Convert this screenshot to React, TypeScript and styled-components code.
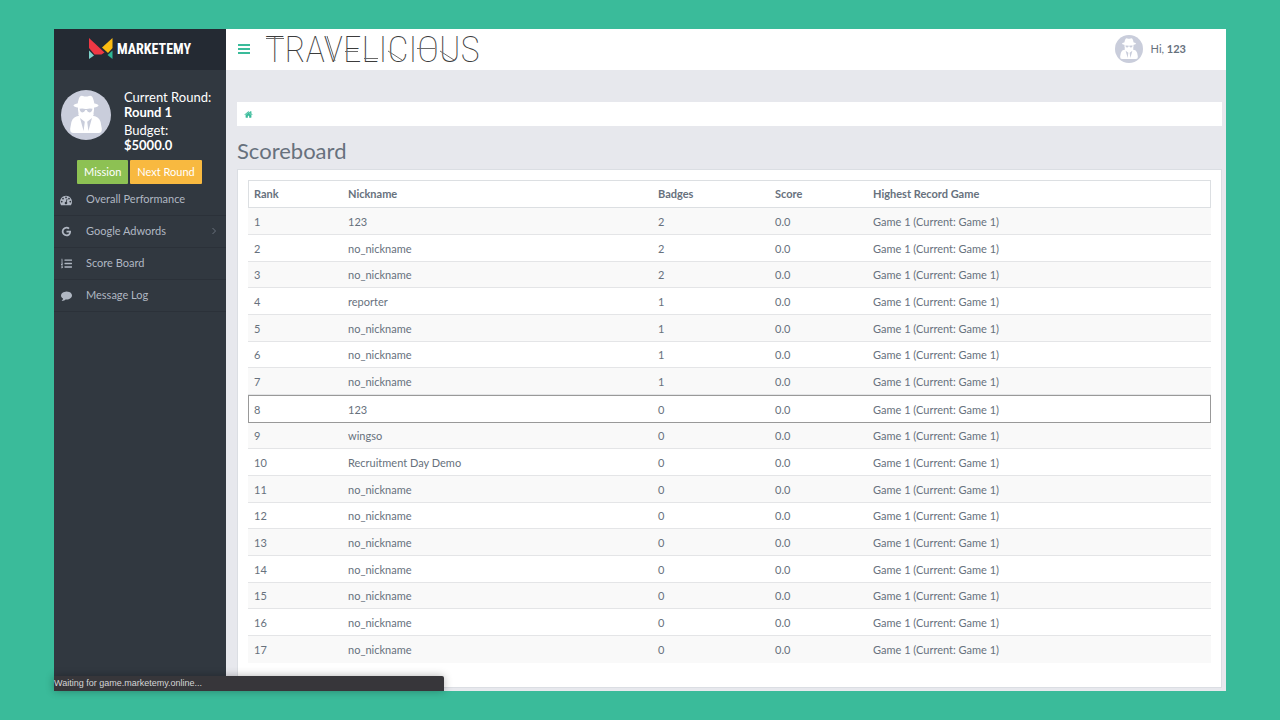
import React from "react";
import styled, { createGlobalStyle } from "styled-components";
import { FaListOl } from "react-icons/fa";

const GlobalStyle = createGlobalStyle`
  *, *::before, *::after { box-sizing: border-box; }
  body {
    margin: 0;
    background: #3abb9a;
    color: #67717d;
    font-family: Lato, "Liberation Sans", sans-serif;
    font-size: 11px;
  }
`;

const Backdrop = styled.div`
  min-height: 100vh;
  padding: 29px 54px;
  display: flex;
`;

const Frame = styled.div`
  position: relative;
  flex: 1;
  display: grid;
  grid-template-columns: 172px minmax(0, 1fr);
  grid-template-rows: 41px auto;
  background: #e7e8ed;
`;

const Brand = styled.a`
  display: flex;
  align-items: center;
  gap: 4px;
  padding: 0 34px 2px;
  background: #242a33;
  color: #ffffff;
  text-decoration: none;
`;

const BrandName = styled.span`
  font-family: "Roboto Condensed", "Liberation Sans Narrow", Roboto, sans-serif;
  font-size: 14px;
  line-height: 16px;
  font-weight: 700;
`;

const TopBar = styled.header`
  display: flex;
  align-items: center;
  padding: 0 40px 2px 12px;
  background: #ffffff;
`;

const MenuButton = styled.button`
  display: flex;
  padding: 0;
  border: 0;
  background: none;
  cursor: pointer;
`;

const ClientLogo = styled.svg`
  width: 240px;
  height: 46px;
  margin: -4px 0 -4px 15px;
  overflow: visible;
  font-family: "Roboto Condensed", "Liberation Sans Narrow", Roboto, sans-serif;
  font-weight: 100;
  font-size: 37px;
`;

const UserLink = styled.a`
  display: flex;
  align-items: center;
  gap: 8px;
  margin-left: auto;
  color: #67717d;
  text-decoration: none;
`;

const Sidebar = styled.aside`
  background: #313840;
`;

const Profile = styled.section`
  display: flex;
  gap: 13px;
  padding: 20px 7px 0;
  color: #ffffff;
`;

const Facts = styled.dl`
  margin: 0;
  font-size: 13px;
  line-height: 15px;
`;

const FactLabel = styled.dt`
  white-space: nowrap;
`;

const FactValue = styled.dd`
  margin: 0 0 4px;
  line-height: 14px;
  font-weight: 700;
`;

const Actions = styled.div`
  display: flex;
  gap: 2px;
  padding: 4px 23px 0;
`;

const ActionButton = styled.button<{ $color: string }>`
  height: 24px;
  padding: 0 7px 1px;
  border: 0;
  border-radius: 1px;
  background: ${(p) => p.$color};
  color: #ffffff;
  font: inherit;
  white-space: nowrap;
  cursor: pointer;
`;

const MenuLink = styled.a`
  display: flex;
  align-items: center;
  height: 32px;
  padding: 0 8px 2px 6px;
  border-bottom: 1px solid #2b3139;
  color: #b0b7c2;
  text-decoration: none;
`;

const MenuIcon = styled.span`
  display: flex;
  justify-content: center;
  width: 12px;
  margin-right: 14px;
  padding-top: 2px;
`;

const MenuArrow = styled.svg`
  margin-left: auto;
  fill: none;
  stroke: #69717c;
`;

const Content = styled.main`
  padding: 32px 4px 3px 11px;
`;

const Breadcrumb = styled.nav`
  display: flex;
  align-items: center;
  height: 24px;
  padding: 0 7px;
  background: #ffffff;
`;

const Heading = styled.h1`
  margin: 12px 0 5px;
  font-size: 22px;
  line-height: 26px;
  font-weight: 400;
`;

const Panel = styled.section`
  padding: 10px 10px 24px;
  border: 1px solid #dbdee3;
  background: #ffffff;
`;

const ScoreTable = styled.table`
  width: 100%;
  table-layout: fixed;
  border-collapse: separate;
  border-spacing: 0;
`;

const Col = styled.col<{ $width?: number }>`
  width: ${(p) => (p.$width ? `${p.$width}px` : "auto")};
`;

const HeadCell = styled.th`
  height: 28px;
  padding: 0 6px 2px;
  border: 0 solid #dcdfe2;
  border-width: 1px 0;
  text-align: left;
  font-weight: 700;
  &:first-child { border-left-width: 1px; padding-left: 5px; }
  &:last-child { border-right-width: 1px; }
`;

const Cell = styled.td`
  height: 27px;
  padding: 0 6px;
  border-bottom: 1px solid #e4e5e7;
`;

const Row = styled.tr<{ $current: boolean }>`
  background: #ffffff;
  &:nth-child(odd) { background: #f9f9f9; }
  &:nth-child(3n) ${Cell} { height: 26px; }
  &:last-child ${Cell} { border-bottom: 0; }
  ${(p) =>
    p.$current &&
    `
    ${Cell} { height: 28px; border-top: 1px solid #999999; border-bottom-color: #999999; }
    ${Cell}:first-child { border-left: 1px solid #999999; padding-left: 5px; }
    ${Cell}:last-child { border-right: 1px solid #999999; }
  `}
`;

const StatusBar = styled.div`
  position: absolute;
  left: 0;
  bottom: 0;
  width: 390px;
  height: 15px;
  border-top-right-radius: 2px;
  background: #37363a;
  box-shadow: 0 0 8px rgba(0, 0, 0, 0.3);
  color: #d5d5d6;
  font-family: "Liberation Sans", sans-serif;
  font-size: 9px;
  line-height: 15px;
`;

const AgentAvatar = ({ size }: { size: number }) => (
  <svg width={size} height={size} viewBox="0 0 50 50" aria-hidden="true">
    <circle cx="25" cy="25" r="25" fill="#c9cddb" />
    <g fill="#ffffff">
      <path d="M16.500 15q.8-6.500 2.500-8.500 1.500-1.200 3-.4 2.500 1 6 0 1.500-.8 3 .4 1.700 2 2.500 8.500z" />
      <ellipse cx="25" cy="15.500" rx="12.500" ry="2.800" />
      <path d="M17 16h16v4q0 4.500-2.500 7.500h-11q-2.500-3-2.500-7.500z" />
      <path d="M17 23.500q3 3 8 3t8-3q-.4 1.500-1 2.200 6 .8 7.600 6.300l1.200 6.500q.4 4.500-3.300 4.500h-25q-3.700 0-3.300-4.500l1.200-6.500q1.600-5.500 7.600-6.300-.6-.7-1-2.200z" />
    </g>
    <g fill="#c9cddb">
      <path d="M18.500 18.800q3.500-.6 5.800.2h1.400q2.300-.8 5.800-.2l-.5 1.600q-.7 2-2.500 2-2 0-2.800-2.400h-1.400q-.8 2.400-2.800 2.400-1.800 0-2.500-2z" />
      <path d="M19 28l4.800 3.800L22.600 41zM31 28l-4.800 3.800L27.400 41z" />
    </g>
  </svg>
);

const MarkSvg = styled.svg`
  flex: none;
`;

const BrandMark = () => (
  <MarkSvg width="25" height="22" viewBox="0 0 25 22" aria-hidden="true">
    <path fill="#ef3844" d="M1 0l15.500 14.500-3 2H6.500L1 10z" />
    <path fill="#fbbc12" d="M24.500 0v10l-4.500 5-6-5.500z" />
    <path fill="#7fd3cb" d="M1 12.500l5 5L1 21z" />
    <path fill="#2eb795" d="M24.500 12.500l-5 4.500 5 4z" />
  </MarkSvg>
);

const Travelicious = () => (
  <ClientLogo viewBox="0 0 240 46" role="img" aria-label="Travelicious">
    <text x="0" y="36" fill="#3c3c3c">TRAVELICIOUS</text>
    <g stroke="#6a6a6a" strokeWidth="1" fill="none">
      <path d="M1 12.500h18M80 25.500h13M99 32.500h14M152 22.500h18" />
      <path d="M62 10l8 25M123 25l14 9M175 25l14 9" />
    </g>
  </ClientLogo>
);

const Glyph = ({ d, size = 12, color = "currentColor" }: { d: string; size?: number; color?: string }) => (
  <svg width={size} height={size} viewBox="0 0 1792 1792" fill={color} aria-hidden="true">
    <path d={d} />
  </svg>
);

const DASHBOARD =
  "M384 1152q0-53-37.5-90.5t-90.5-37.5-90.5 37.5-37.5 90.5 37.5 90.5 90.5 37.5 90.5-37.5 37.5-90.5zm192-448q0-53-37.5-90.5t-90.5-37.5-90.5 37.5-37.5 90.5 37.5 90.5 90.5 37.5 90.5-37.5 37.5-90.5zm428 481l101-382q6-26-7.5-48.5t-38.5-29.5-48 6.5-30 39.5l-101 382q-60 5-107 43.5t-63 98.5q-20 77 20 146t117 89 146-20 89-117q16-60-6-117t-72-91zm660-33q0-53-37.5-90.5t-90.5-37.5-90.5 37.5-37.5 90.5 37.5 90.5 90.5 37.5 90.5-37.5 37.5-90.5zm-640-640q0-53-37.5-90.5t-90.5-37.5-90.5 37.5-37.5 90.5 37.5 90.5 90.5 37.5 90.5-37.5 37.5-90.5zm448 192q0-53-37.5-90.5t-90.5-37.5-90.5 37.5-37.5 90.5 37.5 90.5 90.5 37.5 90.5-37.5 37.5-90.5zm320 448q0 261-141 483-19 29-54 29h-1402q-35 0-54-29-141-221-141-483 0-182 71-348t191-286 286-191 348-71 348 71 286 191 191 286 71 348z";
const GOOGLE =
  "M896 786h725q12 67 12 128 0 217-91 387.5t-259.5 266.500-386.500 96q-157 0-299-60.500t-245-163.500-163.500-245-60.500-299 60.500-299 163.500-245 245-163.500 299-60.500q300 0 515 201l-209 201q-123-119-306-119-129 0-238.500 65t-173.500 176.500-64 243.500 64 243.500 173.500 176.500 238.500 65q87 0 160-24t120-60 82-82 51.500-87 22.500-78h-436v-264z";
const COMMENT =
  "M1792 896q0 174-120 321.5t-326 233-450 85.5q-70 0-145-8-198 175-460 242-49 14-114 22-17 2-30.5-9t-17.5-29v-1q-3-4-.5-12t2-10 4.5-9.5l6-9 7-8.5 8-9q7-8 31-34.500t34.500-38 31-39.500 32.500-51 27-59 26-76q-157-89-247.500-220t-90.500-281q0-130 71-248.500t191-204.500 286-136.500 348-50.500q244 0 450 85.500t326 233 120 321.500z";
const HOME =
  "M1472 992v480q0 26-19 45t-45 19h-384v-384h-256v384h-384q-26 0-45-19t-19-45v-480q0-1 .5-3t.5-3l575-474 575 474q1 2 1 6zm223-69l-62 74q-8 9-21 11h-3q-13 0-21-7l-692-577-692 577q-12 8-24 7-13-2-21-11l-62-74q-8-10-7-23.500t11-21.500l719-599q32-26 76-26t76 26l244 204v-195q0-14 9-23t23-9h192q14 0 23 9t9 23v408l219 182q10 8 11 21.500t-7 23.500z";

const menu = [
  { label: "Overall Performance", icon: <Glyph d={DASHBOARD} /> },
  { label: "Google Adwords", icon: <Glyph d={GOOGLE} size={11} />, expandable: true },
  { label: "Score Board", icon: <FaListOl size={11} /> },
  { label: "Message Log", icon: <Glyph d={COMMENT} size={11} /> },
];

const players: [string, number][] = [
  ["123", 2],
  ["no_nickname", 2],
  ["no_nickname", 2],
  ["reporter", 1],
  ["no_nickname", 1],
  ["no_nickname", 1],
  ["no_nickname", 1],
  ["123", 0],
  ["wingso", 0],
  ["Recruitment Day Demo", 0],
  ["no_nickname", 0],
  ["no_nickname", 0],
  ["no_nickname", 0],
  ["no_nickname", 0],
  ["no_nickname", 0],
  ["no_nickname", 0],
  ["no_nickname", 0],
];

const CURRENT_RANK = 8;

export default function App() {
  return (
    <Backdrop>
      <GlobalStyle />
      <Frame>
        <Brand href="#home">
          <BrandMark />
          <BrandName>MARKETEMY</BrandName>
        </Brand>
        <TopBar>
          <MenuButton type="button" aria-label="Toggle menu">
            <svg width="12" height="10" viewBox="0 0 12 10" fill="#3abb9a" aria-hidden="true">
              <path d="M0 0h12v2H0zM0 4h12v2H0zM0 8h12v2H0z" />
            </svg>
          </MenuButton>
          <Travelicious />
          <UserLink href="#profile">
            <AgentAvatar size={28} />
            <span>
              Hi, <b>123</b>
            </span>
          </UserLink>
        </TopBar>
        <Sidebar>
          <Profile>
            <AgentAvatar size={50} />
            <Facts>
              <FactLabel>Current Round:</FactLabel>
              <FactValue>Round 1</FactValue>
              <FactLabel>Budget:</FactLabel>
              <FactValue>$5000.0</FactValue>
            </Facts>
          </Profile>
          <Actions>
            <ActionButton type="button" $color="#8dc153">Mission</ActionButton>
            <ActionButton type="button" $color="#f8b940">Next Round</ActionButton>
          </Actions>
          <nav aria-label="Main">
            {menu.map((item) => (
              <MenuLink key={item.label} href="#menu">
                <MenuIcon>{item.icon}</MenuIcon>
                {item.label}
                {item.expandable && (
                  <MenuArrow width="8" height="8" viewBox="0 0 8 8" aria-hidden="true">
                    <path d="M2.500 1l3 3-3 3" />
                  </MenuArrow>
                )}
              </MenuLink>
            ))}
          </nav>
        </Sidebar>
        <Content>
          <Breadcrumb aria-label="Breadcrumb">
            <a href="#home" aria-label="Home">
              <Glyph d={HOME} size={9} color="#3abb9a" />
            </a>
          </Breadcrumb>
          <Heading>Scoreboard</Heading>
          <Panel>
            <ScoreTable>
              <colgroup>
                <Col $width={94} />
                <Col />
                <Col $width={117} />
                <Col $width={98} />
                <Col $width={344} />
              </colgroup>
              <thead>
                <tr>
                  <HeadCell>Rank</HeadCell>
                  <HeadCell>Nickname</HeadCell>
                  <HeadCell>Badges</HeadCell>
                  <HeadCell>Score</HeadCell>
                  <HeadCell>Highest Record Game</HeadCell>
                </tr>
              </thead>
              <tbody>
                {players.map(([nickname, badges], i) => (
                  <Row key={i} $current={i + 1 === CURRENT_RANK}>
                    <Cell>{i + 1}</Cell>
                    <Cell>{nickname}</Cell>
                    <Cell>{badges}</Cell>
                    <Cell>0.0</Cell>
                    <Cell>Game 1 (Current: Game 1)</Cell>
                  </Row>
                ))}
              </tbody>
            </ScoreTable>
          </Panel>
        </Content>
        <StatusBar role="status">Waiting for game.marketemy.online...</StatusBar>
      </Frame>
    </Backdrop>
  );
}
